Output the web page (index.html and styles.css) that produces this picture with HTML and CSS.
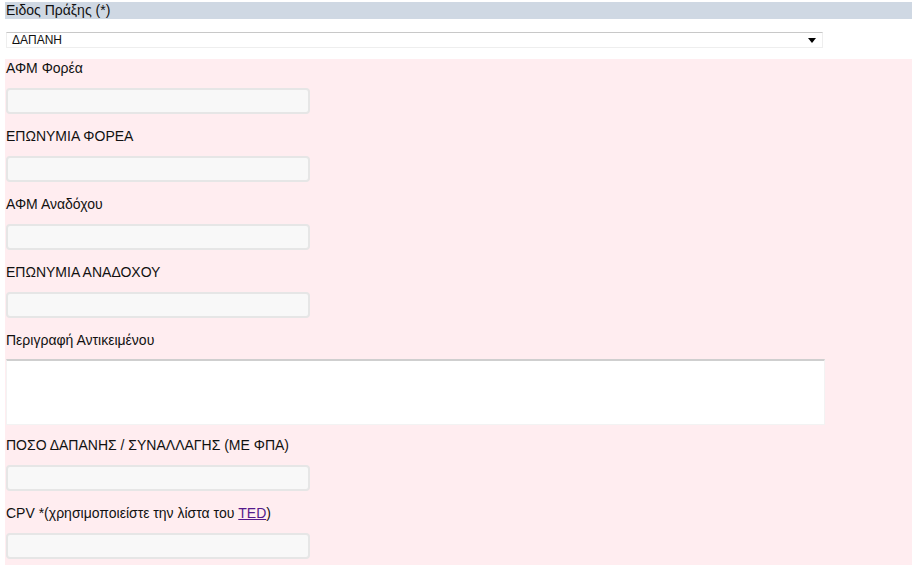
FILE: index.html
```html
<!DOCTYPE html>
<html lang="el">

<head>
    <meta charset="UTF-8">
    <meta name="viewport" content="width=device-width, initial-scale=1.0">
    <title>Πράξη</title>
    <link rel="stylesheet" href="styles.css">
</head>

<body>
    <div class="form">
        <div class="title">Ειδος Πράξης (*)</div>
        <div class="type-row">
            <div class="select">
                <span>ΔΑΠΑΝΗ</span>
                <svg class="arrow" width="8" height="5" viewBox="0 0 8 5"><path d="M0 0H8L4 5Z" fill="#000"/></svg>
            </div>
        </div>
        <div class="fields">
            <label class="lbl">ΑΦΜ Φορέα</label>
            <div class="input"></div>
            <label class="lbl">ΕΠΩΝΥΜΙΑ ΦΟΡΕΑ</label>
            <div class="input"></div>
            <label class="lbl">ΑΦΜ Αναδόχου</label>
            <div class="input"></div>
            <label class="lbl">ΕΠΩΝΥΜΙΑ ΑΝΑΔΟΧΟΥ</label>
            <div class="input"></div>
            <label class="lbl lbl-area">Περιγραφή Αντικειμένου</label>
            <div class="textarea"></div>
            <label class="lbl">ΠΟΣΟ ΔΑΠΑΝΗΣ / ΣΥΝΑΛΛΑΓΗΣ (ΜΕ ΦΠΑ)</label>
            <div class="input"></div>
            <label class="lbl">CPV *(χρησιμοποιείστε την λίστα του <a href="#">TED</a>)</label>
            <div class="input"></div>
        </div>
    </div>
</body>

</html>
```

FILE: styles.css
```css
* {
    margin: 0;
    padding: 0;
    box-sizing: border-box;
}
html, body {
    width: 100%;
    height: 100%;
    background: #fff;
}
body {
    padding: 2px 0 0 5px;
    font-family: "Liberation Sans", Arial, sans-serif;
    font-size: 14px;
    color: #111;
    overflow: hidden;
}
.title {
    height: 17px;
    line-height: 17px;
    padding-left: 1px;
    background-color: #cfd8e3;
}
.type-row {
    height: 40px;
    padding: 13px 0 0 1px;
}
.select {
    width: 817px;
    height: 16px;
    border: 1px solid #eee;
    border-top-color: #c8c8c8;
    background: #fff;
    display: flex;
    align-items: center;
    justify-content: space-between;
    padding: 0 6px 0 5px;
    font-size: 12px;
    line-height: 14px;
}
.arrow {
    display: block;
}
.fields {
    background-color: #ffedf0;
    padding: 1px 0 20px 1px;
}
.lbl {
    display: block;
    line-height: 17px;
    margin-bottom: 11px;
}
.lbl-area {
    margin-bottom: 10px;
}
.lbl a {
    color: #551a8b;
}
.input {
    width: 304px;
    height: 26px;
    border: 2px solid #e6e6e6;
    border-radius: 4px;
    background: #f8f8f8;
    margin-bottom: 14px;
}
.textarea {
    width: 819px;
    height: 66px;
    border: 1px solid #f3f3f3;
    border-top: 2px solid #cfcfcf;
    background: #fff;
    margin-bottom: 12px;
}
```
